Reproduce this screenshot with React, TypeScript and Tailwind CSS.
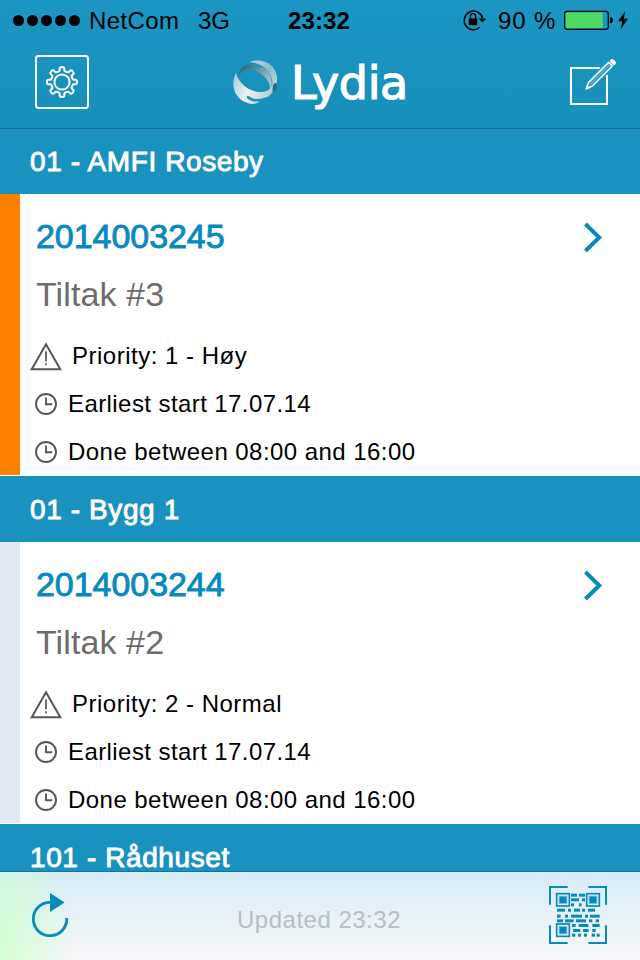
import React from 'react';

type Order = {
  id: string;
  building: string;
  title: string;
  priority: string;
  start: string;
  done: string;
  barClass: string;
};

const orders: Order[] = [
  {
    id: '2014003245',
    building: '01 - AMFI Roseby',
    title: 'Tiltak #3',
    priority: 'Priority: 1 - Høy',
    start: 'Earliest start 17.07.14',
    done: 'Done between 08:00 and 16:00',
    barClass: 'bg-[#ff8000]',
  },
  {
    id: '2014003244',
    building: '01 - Bygg 1',
    title: 'Tiltak #2',
    priority: 'Priority: 2 - Normal',
    start: 'Earliest start 17.07.14',
    done: 'Done between 08:00 and 16:00',
    barClass: 'bg-[#e2e9f1]',
  },
];

// Eight-toothed gear outline: round-shouldered teeth around 0,0
const gearPath = () => {
  const at = (r: number, a: number) => `${(r * Math.cos(a)).toFixed(2)} ${(r * Math.sin(a)).toFixed(2)}`;
  let d = '';
  for (let i = 0; i < 8; i++) {
    const mid = (i * Math.PI) / 4;
    d += `${i === 0 ? 'M' : 'L'}${at(11.6, mid - 0.2)}`;
    d += `L${at(14, mid - 0.17)}Q${at(15.2, mid - 0.14)} ${at(15.1, mid)}`;
    d += `Q${at(15.2, mid + 0.14)} ${at(14, mid + 0.17)}L${at(11.6, mid + 0.2)}`;
    d += `Q${at(10.2, mid + Math.PI / 8)} ${at(11.6, mid + Math.PI / 4 - 0.2)}`;
  }
  return `${d}Z`;
};

const GearIcon = () => (
  <svg className="h-[54px] w-[54px]" viewBox="-27 -27 54 54" fill="none" stroke="white" strokeWidth="2">
    <rect x="-26" y="-26" width="52" height="52" rx="2.5" strokeWidth="1.9" />
    <path d={gearPath()} strokeLinejoin="round" />
    <circle r="7.6" />
  </svg>
);

const GlobeLogo = () => (
  <svg className="h-[45px] w-[45px]" viewBox="26 26 135 135">
    <defs>
      <linearGradient id="shell" gradientUnits="userSpaceOnUse" x1="27" y1="80" x2="150" y2="140">
        <stop offset="0" stopColor="#a9cedc" />
        <stop offset="0.45" stopColor="#eef3f4" />
        <stop offset="1" stopColor="#a5c3cd" />
      </linearGradient>
      <linearGradient id="arc" x1="0" y1="0" x2="1" y2="1">
        <stop offset="0" stopColor="#b5d5e1" />
        <stop offset="0.5" stopColor="#8fbccb" />
        <stop offset="1" stopColor="#d9e6ea" />
      </linearGradient>
      <linearGradient id="band" x1="0" y1="0" x2="1" y2="0.5">
        <stop offset="0" stopColor="#215e70" />
        <stop offset="0.55" stopColor="#5b93a3" />
        <stop offset="1" stopColor="#9fc0c9" />
      </linearGradient>
    </defs>
    <path
      fill="url(#band)"
      d="M43 72C44 50 63 37 82 40C96 43 102 51 112 48C134 55 145 78 142 110L137 112C138 86 108 58 78 54C62 53 51 61 43 72Z"
    />
    <path
      fill="url(#arc)"
      d="M75 32C92 24 124 25 142 43C158 59 162 83 154 107C149 119 143 124 137 129C141 119 144 110 144 99C146 74 129 51 107 41C99 36 89 34 75 32Z"
    />
    <path
      fill="url(#shell)"
      d="M35 64C40 90 66 114 96 121C116 125 133 119 142 106C150 112 145 126 134 134C122 142 104 143 92 143C84 143 76 133 69 133C64 137 70 146 82 149C91 151 100 151 106 150C98 158 84 160 70 155C43 148 26 123 27 96C27 83 31 72 35 64Z"
    />
    <ellipse cx="151" cy="109" rx="6" ry="14" fill="#2c6f83" transform="rotate(12 151 109)" />
  </svg>
);

const ComposeIcon = () => (
  <svg className="h-[50px] w-[50px]" viewBox="27 21 150 150" fill="none" stroke="white">
    <path d="M119 54H33V162H141V75" strokeWidth="6" />
    <path d="M79 116L86 97L146 37L157 48L97 108Z" strokeWidth="5" strokeLinejoin="round" />
    <path d="M91 103L151 43" strokeWidth="3" opacity="0.6" />
    <path d="M78 118L82 106L89 113Z" fill="white" strokeWidth="2" />
    <path d="M156 33L162 39" strokeWidth="12" strokeLinecap="round" />
  </svg>
);

const WarningIcon = () => (
  <svg className="h-[29px] w-[32px]" viewBox="0 0 32 29" fill="none" stroke="#555">
    <path d="M16 2.2L30.3 27.2H1.7Z" strokeWidth="2" />
    <path d="M16 9.2V19.5M16 21.2V23.2" strokeWidth="1.7" />
  </svg>
);

const ClockIcon = () => (
  <svg className="h-[22px] w-[22px]" viewBox="0 0 22 22" fill="none" stroke="#555" strokeWidth="1.9">
    <circle cx="11" cy="11" r="10" />
    <path d="M11 4.5V11.2H17.2" />
  </svg>
);

const RefreshIcon = () => (
  <svg className="h-[46px] w-[38px]" viewBox="0 0 38 46">
    <path d="M19 11.3A16.7 16.7 0 1 0 35.7 27" fill="none" stroke="#088ABC" strokeWidth="2.8" />
    <path d="M19 2L33.6 11.4L19 21Z" fill="#088ABC" />
  </svg>
);

// x, y, width of the small modules of the code
const modules = [
  [123, 86, 18], [147, 86, 18], [123, 100, 24], [156, 100, 9], [123, 115, 9], [147, 115, 8],
  [81, 131, 24], [114, 131, 9], [132, 131, 18], [156, 131, 9], [174, 131, 21],
  [81, 149, 11], [105, 149, 9], [123, 149, 33], [165, 149, 9], [180, 149, 29],
  [81, 163, 18], [105, 163, 26], [138, 163, 30], [177, 163, 10], [197, 163, 10],
  [126, 177, 11], [146, 177, 29], [187, 177, 22],
  [129, 192, 22], [159, 192, 17], [187, 192, 10],
  [126, 206, 10], [144, 206, 9], [162, 206, 9], [185, 206, 10], [200, 206, 9],
];

const QrIcon = () => (
  <svg className="h-[58px] w-[58px]" viewBox="57 63 174 174" fill="#088ABC">
    <path
      d="M60 119V66H113M175 66H228V119M228 181V234H175M113 234H60V181"
      fill="none"
      stroke="#088ABC"
      strokeWidth="6"
    />
    {[[78, 84], [168, 84], [78, 175]].map(([x, y]) => (
      <g key={`${x}-${y}`}>
        <rect x={x + 2} y={y + 2} width="38" height="37" fill="none" stroke="#088ABC" strokeWidth="5" />
        <rect x={x + 11} y={y + 11} width="20" height="19" />
        <rect x={x + 8} y={y + 8} width="26" height="25" opacity="0.5" />
      </g>
    ))}
    {modules.map(([x, y, w]) => (
      <rect key={`${x}-${y}`} x={x} y={y} width={w} height="9" />
    ))}
  </svg>
);

const StatusBar = () => (
  <div className="flex h-10 items-center pl-[13px] text-[24px] leading-10 whitespace-nowrap text-black">
    <div className="flex w-[76px] gap-[2.6px] pt-px">
      {[0, 1, 2, 3, 4].map((dot) => (
        <span key={dot} className="h-[11.4px] w-[11.4px] rounded-full bg-black" />
      ))}
    </div>
    <span className="w-[109px] pt-[2px] tracking-[0.4px]">NetCom</span>
    <span className="w-[90px] pt-[2px]">3G</span>
    <span className="w-[174px] pt-[2px] font-bold tracking-[0.1px]">23:32</span>
    <svg className="h-[24px] w-[25px]" viewBox="0 0 25 24">
      <path d="M17.8 19.3A9.3 9.3 0 1 1 20.5 10" fill="none" stroke="black" strokeWidth="1.5" />
      <path d="M16.4 10.4H24.4L20.4 14.6Z" />
      <rect x="6.8" y="10.5" width="8.5" height="6.7" rx="0.7" />
      <path d="M8.4 11V8.5A2.65 2.9 0 0 1 13.7 8.5V11" fill="none" stroke="black" strokeWidth="1.4" />
    </svg>
    <span className="ml-[11px] w-[66px] pt-[2px] tracking-[0.9px]">90 %</span>
    <svg className="h-[26px] w-[66px]" viewBox="0 0 66 26">
      <rect x="0.7" y="4.3" width="43.6" height="18" rx="2.5" fill="none" stroke="black" strokeWidth="1.3" />
      <rect x="1.6" y="5.6" width="37.2" height="15.4" rx="1" fill="#4cd964" />
      <path d="M46 10.3Q49 10.3 49 13.3Q49 16.3 46 16.3Z" />
      <path d="M61.3 4L54.2 14.2H58.2L56.6 22.4L64 11.7H59.8Z" />
    </svg>
  </div>
);

const SectionHeader = ({ children }: { children: React.ReactNode }) => (
  <div className="h-[66px] shrink-0 bg-[#1992c0] pl-[30px] text-[28px] leading-[67px] tracking-[0.6px] text-white [-webkit-text-stroke:0.9px_white]">
    {children}
  </div>
);

const OrderCard = ({ order }: { order: Order }) => (
  <div className="flex h-[282px] shrink-0 bg-white">
    <div className={`h-[281px] w-5 ${order.barClass}`} />
    <div className="flex-1 pt-[18px]">
      <div className="flex h-[50px] items-center justify-between pr-[37px] pl-4">
        <span className="pb-[2px] text-[34px] tracking-[-0.05px] text-[#088ABC] [-webkit-text-stroke:0.9px_#088ABC]">{order.id}</span>
        <svg className="h-[31px] w-[20px]" viewBox="0 0 20 31" fill="none" stroke="#088ABC" strokeWidth="4">
          <path d="M2.4 2L16.2 15.5L2.4 29" />
        </svg>
      </div>
      <div className="h-[70px] pl-4 text-[34px] leading-[64px] tracking-[0.1px] text-[#6c6c6c]">{order.title}</div>
      <div className="text-[24px] leading-[48px] text-black">
        <div className="flex h-12 items-center pl-[10px]">
          <WarningIcon />
          <span className="ml-[10px] tracking-[0.5px]">{order.priority}</span>
        </div>
        <div className="flex h-12 items-center pl-[15px]">
          <ClockIcon />
          <span className="ml-[11px] tracking-[0.42px]">{order.start}</span>
        </div>
        <div className="flex h-12 items-center pl-[15px]">
          <ClockIcon />
          <span className="ml-[11px] tracking-[0.45px]">{order.done}</span>
        </div>
      </div>
    </div>
  </div>
);

export default function App() {
  return (
    <div className="flex h-[960px] w-[640px] flex-col overflow-hidden bg-white font-['Liberation_Sans',Arial,sans-serif]">
      <header className="z-10 h-[129px] shrink-0 border-b border-[#166f93] bg-linear-to-b from-[#1b96c3] to-[#188fbb]">
        <StatusBar />
        <div className="flex h-[84px] items-center pr-[21px] pl-[35px]">
          <GearIcon />
          <div className="ml-[144px] flex flex-1 items-center">
            <GlobeLogo />
            <span className="ml-[13px] pt-px font-['DejaVu_Sans',sans-serif] text-[46px] leading-[60px] tracking-[-0.4px] text-white [-webkit-text-stroke:1.2px_white]">
              Lydia
            </span>
          </div>
          <ComposeIcon />
        </div>
      </header>

      <main className="flex h-[742px] shrink-0 flex-col">
        <div className="-mt-px flex flex-col">
          {orders.map((order) => (
            <React.Fragment key={order.id}>
              <SectionHeader>{order.building}</SectionHeader>
              <OrderCard order={order} />
            </React.Fragment>
          ))}
          <SectionHeader>101 - Rådhuset</SectionHeader>
        </div>
      </main>

      {/* Bottom toolbar */}
      <footer className="z-10 flex h-[89px] shrink-0 items-center justify-between border-t border-[#15759d] bg-[#e7f2f7] bg-[radial-gradient(ellipse_85px_150px_at_-10px_85%,#ccffcc_0%,#d2fdd200_100%),linear-gradient(to_bottom,#d6ecf6,#f8f8f9)] pr-[33px] pl-[31px]">
        <div className="pb-[5px]">
          <RefreshIcon />
        </div>
        <span className="ml-[20px] pt-[7px] text-[24px] tracking-[0.5px] text-[#b9bec0]">Updated 23:32</span>
        <div className="pb-[2px]">
          <QrIcon />
        </div>
      </footer>
    </div>
  );
}
